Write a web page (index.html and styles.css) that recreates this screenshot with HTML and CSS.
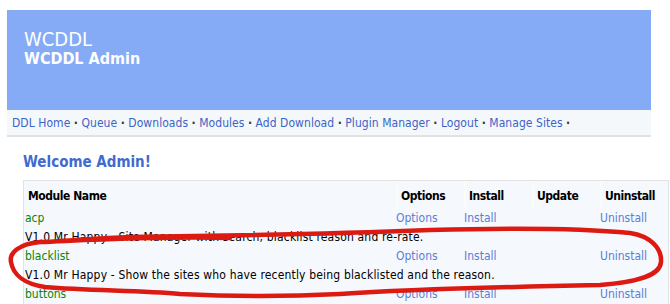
FILE: index.html
```html
<!DOCTYPE html>
<html lang="en">
<head>
    <meta charset="UTF-8">
    <title>WCDDL Admin</title>
    <link rel="stylesheet" href="styles.css">
</head>
<body>
    <div class="header">
        <div class="site-name">WCDDL</div>
        <div class="site-sub">WCDDL Admin</div>
    </div>
    <div class="nav">
        <a href="#">DDL Home</a> <span class="sep">&middot;</span>
        <a href="#">Queue</a> <span class="sep">&middot;</span>
        <a href="#">Downloads</a> <span class="sep">&middot;</span>
        <a href="#">Modules</a> <span class="sep">&middot;</span>
        <a href="#">Add Download</a> <span class="sep">&middot;</span>
        <a href="#">Plugin Manager</a> <span class="sep">&middot;</span>
        <a href="#">Logout</a> <span class="sep">&middot;</span>
        <a href="#">Manage Sites</a> <span class="sep">&middot;</span>
    </div>
    <div class="content">
        <h2>Welcome Admin!</h2>
        <table class="modules">
            <colgroup>
                <col class="name-col">
                <col class="btn-col">
                <col class="btn-col">
                <col class="btn-col">
                <col class="btn-col">
            </colgroup>
            <tr class="head">
                <th class="first">Module Name</th>
                <th>Options</th>
                <th>Install</th>
                <th>Update</th>
                <th>Uninstall</th>
            </tr>
            <tr>
                <td class="mod">acp</td>
                <td><a href="#">Options</a></td>
                <td><a href="#">Install</a></td>
                <td></td>
                <td><a href="#">Uninstall</a></td>
            </tr>
            <tr>
                <td colspan="5" class="desc">V1.0 Mr Happy - Site Manager with search, blacklist reason and re-rate.</td>
            </tr>
            <tr>
                <td class="mod">blacklist</td>
                <td><a href="#">Options</a></td>
                <td><a href="#">Install</a></td>
                <td></td>
                <td><a href="#">Uninstall</a></td>
            </tr>
            <tr>
                <td colspan="5" class="desc">V1.0 Mr Happy - Show the sites who have recently being blacklisted and the reason.</td>
            </tr>
            <tr>
                <td class="mod">buttons</td>
                <td><a href="#">Options</a></td>
                <td><a href="#">Install</a></td>
                <td></td>
                <td><a href="#">Uninstall</a></td>
            </tr>
        </table>
    </div>

    <svg class="scribble" width="670" height="304" viewBox="0 0 670 304">
        <path d="M230 238 C 160 236, 90 240, 40 242 C 20 244, 9 252, 11 262 C 13 275, 25 284, 45 287 C 90 291, 140 290, 180 294 C 240 297, 300 296, 340 294 C 400 290, 500 287, 600 285 C 640 282, 660 275, 661 262 C 662 248, 650 236, 630 233 C 580 228, 500 228, 430 230 C 330 234, 220 236, 130 237 C 100 238, 80 240, 60 241"
              fill="none" stroke="#dc1a12" stroke-width="4.5" stroke-linecap="round"/>
    </svg>
</body>
</html>
```

FILE: styles.css
```css
body { margin: 10px 0 0 7px; font-family: "DejaVu Sans Condensed", "DejaVu Sans", sans-serif; font-size: 12px; color: #000; background: #fff; }
a { color: #3d63c6; text-decoration: none; }

.header { width: 644px; height: 100px; background: #86abf6; color: #fff; box-sizing: border-box; padding: 19px 0 0 17px; }
.site-name { font-size: 20px; line-height: 21px; }
.site-sub { font-size: 16px; font-weight: bold; line-height: 17px; }

.nav { width: 644px; height: 27px; box-sizing: border-box; background: #f4f8fb; border-bottom: 2px solid #e2e2e2; padding: 6px 0 0 5px; font-size: 12px; letter-spacing: 0.05px; }
.nav .sep { color: #333; font-weight: bold; }

.content { padding-left: 16px; }
.content h2 { margin: 16px 0 9px 0; font-size: 15px; color: #3f6bcf; }

.modules { width: 643px; table-layout: fixed; border: 1px solid #e3e3e3; border-spacing: 0; background: #f5f8fc; }
.name-col { width: 372px; }
.btn-col { width: 68px; }
.modules th { text-align: left; font-size: 12px; letter-spacing: -0.45px; height: 26px; padding: 2px 0 0 3px; border-left: 2px solid #fbfbf8; }
.modules th.first { border-left: none; padding-left: 4px; }
.modules td { padding: 0; height: 19px; line-height: 19px; white-space: nowrap; }
.modules td.mod { color: #088408; padding-left: 1px; }
.modules td.desc { padding-left: 1px; letter-spacing: 0.17px; }
.modules td a { color: #5a7fd6; }

.scribble { position: absolute; left: 0; top: 0; pointer-events: none; }
```
